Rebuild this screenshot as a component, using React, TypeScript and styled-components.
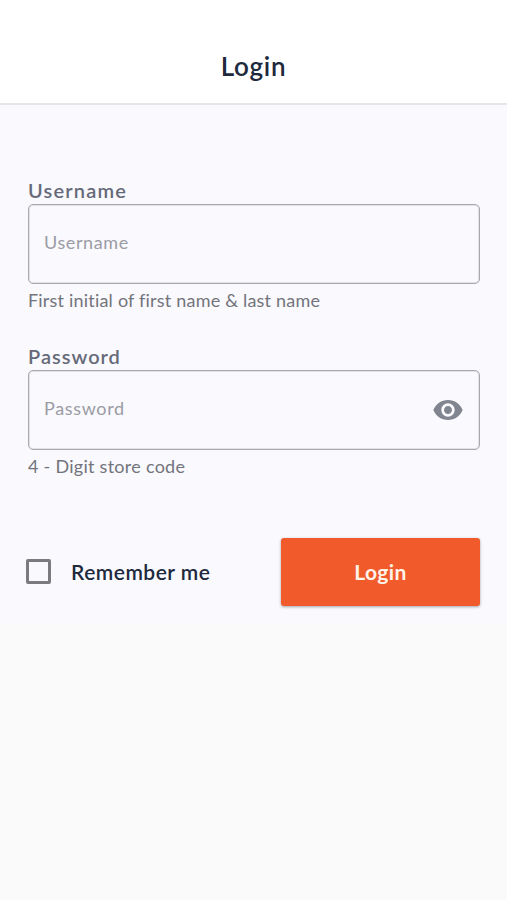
import React, { useState } from 'react';
import styled, { createGlobalStyle } from 'styled-components';

const GlobalStyle = createGlobalStyle`
  * { box-sizing: border-box; }
  body { margin: 0; background: #fafafa; font-family: Lato, "Open Sans", sans-serif; }
`;

const Screen = styled.main`
  min-height: 900px;
  background: #fafafa;
`;

const Header = styled.header`
  height: 105px;
  padding-top: 29px;
  display: flex;
  align-items: center;
  justify-content: center;
  background: #fff;
  border-bottom: 2px solid #e6e6ea;
`;

const Title = styled.h1`
  margin: 0;
  font-size: 26px;
  line-height: 32px;
  font-weight: 600;
  letter-spacing: 0.7px;
  color: #20293c;
`;

const Form = styled.form`
  height: 520px;
  padding: 75px 27px 0 28px;
  background: #f9f9fe;
`;

const Field = styled.div`
  height: 166px;
`;

const Label = styled.label<{ $spacing: number }>`
  display: block;
  height: 24px;
  font-size: 20px;
  line-height: 20px;
  font-weight: 600;
  letter-spacing: ${(p) => p.$spacing}px;
  color: #666a78;
`;

const InputBox = styled.div`
  height: 80px;
  display: flex;
  align-items: center;
  padding: 0 15px;
  border: 1px solid #a9a9af;
  border-radius: 5px;
  box-shadow: inset 0 0 0 1px rgba(169, 169, 175, 0.3);
`;

const Input = styled.input<{ $spacing: number }>`
  flex: 1;
  min-width: 0;
  padding: 0 0 4px;
  border: 0;
  outline: 0;
  background: transparent;
  color: #20293c;
  font: 400 18px/24px Lato, "Open Sans", sans-serif;
  letter-spacing: ${(p) => p.$spacing}px;
  &::placeholder { color: #9b9ca4; opacity: 1; }
`;

const Toggle = styled.button`
  display: flex;
  padding: 0;
  border: 0;
  background: transparent;
  color: #808590;
`;

const Hint = styled.p<{ $spacing: number }>`
  margin: 0;
  padding-top: 4px;
  font-size: 18px;
  line-height: 24px;
  letter-spacing: ${(p) => p.$spacing}px;
  color: #73747b;
`;

const Actions = styled.div`
  display: flex;
  align-items: center;
  justify-content: space-between;
  height: 69px;
  margin-top: 25px;
`;

const Remember = styled.label`
  display: flex;
  align-items: center;
  gap: 20px;
  margin-left: -2px;
  font-size: 21px;
  line-height: 26px;
  font-weight: 600;
  letter-spacing: 0.5px;
  color: #20293c;
`;

const Checkbox = styled.input`
  appearance: none;
  width: 25px;
  height: 25px;
  margin: 0;
  border: 3px solid #7b7b7e;
  border-radius: 2px;
  &:checked { background: #f15a2b; }
`;

const Submit = styled.button`
  width: 199px;
  height: 68px;
  padding: 0;
  border: 0;
  border-radius: 3px;
  background: #f15a2b;
  box-shadow: 0 1px 3px rgba(0, 0, 0, 0.35);
  color: #fff3e9;
  font: 700 21px/26px Lato, "Open Sans", sans-serif;
  letter-spacing: 0.4px;
`;

function EyeIcon() {
  return (
    <svg width="32" height="32" viewBox="0 0 24 24" fill="currentColor" aria-hidden="true">
      <path d="M12 4.5C7 4.5 2.73 7.61 1 12c1.73 4.39 6 7.5 11 7.5s9.27-3.11 11-7.5c-1.73-4.39-6-7.5-11-7.5zM12 17c-2.76 0-5-2.24-5-5s2.24-5 5-5 5 2.24 5 5-2.24 5-5 5zm0-8c-1.66 0-3 1.34-3 3s1.34 3 3 3 3-1.34 3-3-1.34-3-3-3z" />
    </svg>
  );
}

export default function App() {
  const [visible, setVisible] = useState(false);
  return (
    <Screen>
      <GlobalStyle />
      <Header>
        <Title>Login</Title>
      </Header>
      <Form onSubmit={(e) => e.preventDefault()}>
        <Field>
          <Label htmlFor="username" $spacing={1.2}>Username</Label>
          <InputBox>
            <Input id="username" placeholder="Username" $spacing={0.6} />
          </InputBox>
          <Hint $spacing={0.2}>First initial of first name &amp; last name</Hint>
        </Field>
        <Field>
          <Label htmlFor="password" $spacing={1}>Password</Label>
          <InputBox>
            <Input id="password" type={visible ? 'text' : 'password'} placeholder="Password" $spacing={0.65} />
            <Toggle type="button" aria-label="Show password" onClick={() => setVisible(!visible)}>
              <EyeIcon />
            </Toggle>
          </InputBox>
          <Hint $spacing={0.27}>4 - Digit store code</Hint>
        </Field>
        <Actions>
          <Remember>
            <Checkbox type="checkbox" />
            Remember me
          </Remember>
          <Submit type="submit">Login</Submit>
        </Actions>
      </Form>
    </Screen>
  );
}
